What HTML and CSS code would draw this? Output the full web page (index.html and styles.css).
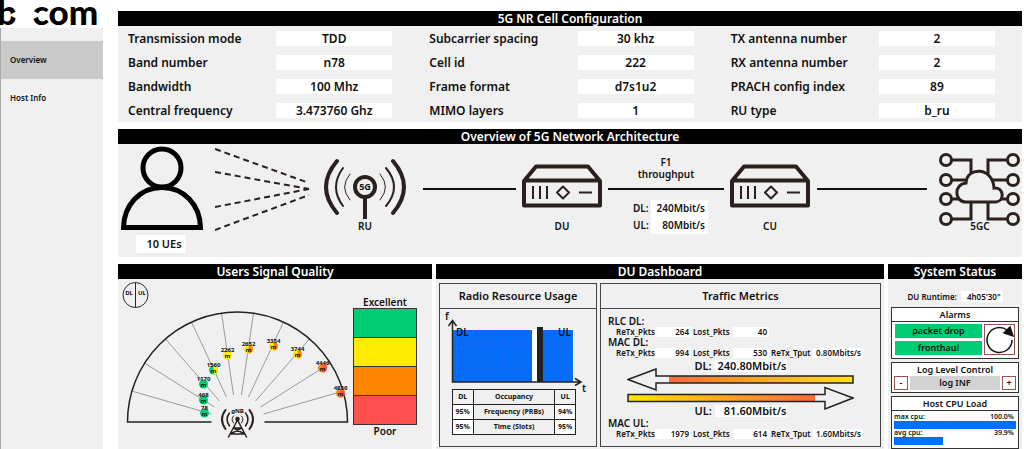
FILE: index.html
```html
<!DOCTYPE html>
<html lang="en">
<head>
<meta charset="utf-8">
<title>5G Network Overview</title>
<link rel="stylesheet" href="styles.css">
</head>
<body>
<svg width="0" height="0" class="defs" aria-hidden="true">
  <defs>
    <symbol id="server" viewBox="0 0 82 76">
      <g fill="none" stroke="#2a211f" stroke-linejoin="round">
        <path d="M3 37 15 22.500H67L79 37V61.500H3ZM3 36.500H79" stroke-width="4"/>
        <path d="M12 42V55M19 42V55M26 42V55M58 48.500H71M42 42.500 48 48.500 42 54.500 36 48.500Z" stroke-width="2"/>
      </g>
    </symbol>
  </defs>
</svg>
<div class="app">
  <aside class="sidebar">
    <svg class="logo" viewBox="0 0 103 28" role="img" aria-label="b com">
      <text x="-3" y="25">b</text>
      <text x="32" y="25">com</text>
      <path d="M9 15 19 10V20ZM42 15 31 10V20Z" fill="#fff"/>
    </svg>
    <nav class="nav">
      <a class="nav-link active" href="#overview">Overview</a>
      <a class="nav-link" href="#host">Host Info</a>
    </nav>
  </aside>

  <main class="main" id="overview">
    <section class="section">
      <h2 class="bar">5G NR Cell Configuration</h2>
      <div class="config">
        <dl class="pairs">
          <dt>Transmission mode</dt><dd>TDD</dd>
          <dt>Band number</dt><dd>n78</dd>
          <dt>Bandwidth</dt><dd>100 Mhz</dd>
          <dt>Central frequency</dt><dd>3.473760 Ghz</dd>
        </dl>
        <dl class="pairs">
          <dt>Subcarrier spacing</dt><dd>30 khz</dd>
          <dt>Cell id</dt><dd>222</dd>
          <dt>Frame format</dt><dd>d7s1u2</dd>
          <dt>MIMO layers</dt><dd>1</dd>
        </dl>
        <dl class="pairs">
          <dt>TX antenna number</dt><dd>2</dd>
          <dt>RX antenna number</dt><dd>2</dd>
          <dt>PRACH config index</dt><dd>89</dd>
          <dt>RU type</dt><dd>b_ru</dd>
        </dl>
      </div>
    </section>

    <section class="section">
      <h2 class="bar">Overview of 5G Network Architecture</h2>
      <div class="arch">
        <div class="node">
          <svg width="86" height="90" viewBox="0 0 86 90" fill="none" stroke="#000" stroke-width="5">
            <circle cx="44" cy="24" r="19"/>
            <path d="M5.500 83.500C6 61 22 43.500 44 43.500S82 61 82.500 83.500Z"/>
          </svg>
          <span class="ues">10 UEs</span>
        </div>
        <svg class="beams" width="100" height="90" viewBox="0 0 100 90" fill="none" stroke="#2a211f" stroke-width="2" stroke-dasharray="6 4">
          <path d="M0 5 94 39M0 28 94 45M0 63 94 45M0 86 94 51"/>
        </svg>
        <div class="node">
          <svg width="84" height="76" viewBox="0 0 84 76" fill="none" stroke="#2a211f" stroke-linecap="round">
            <circle cx="42" cy="43" r="10" stroke-width="4"/>
            <path d="M42 54V75" stroke-width="4" stroke-linecap="butt"/>
            <path d="M27 30Q16 43 27 56M57 30Q68 43 57 56" stroke-width="1"/>
            <path d="M20 24Q6 43 20 62M63 24Q79 43 63 62" stroke-width="2"/>
            <path d="M14 17Q-8 43 14 69M70 17Q92 43 70 69" stroke-width="4"/>
            <text class="svg-tiny" x="42" y="46">5G</text>
          </svg>
          <span class="label">RU</span>
        </div>
        <div class="wire wire-a"></div>
        <div class="node">
          <svg width="82" height="76"><use href="#server"/></svg>
          <span class="label">DU</span>
        </div>
        <div class="wire wire-b">
          <p class="f1">F1<br>throughput</p>
          <dl class="rates">
            <dt>DL:</dt><dd>240Mbit/s</dd>
            <dt>UL:</dt><dd>80Mbit/s</dd>
          </dl>
        </div>
        <div class="node">
          <svg width="82" height="76"><use href="#server"/></svg>
          <span class="label">CU</span>
        </div>
        <div class="wire wire-c"></div>
        <div class="node core">
          <svg width="84" height="84" viewBox="0 0 84 84" fill="none" stroke="#2a211f" stroke-width="3">
            <circle cx="8" cy="16" r="5.500"/><circle cx="8" cy="36" r="5.500"/><circle cx="8" cy="55" r="5.500"/><circle cx="8" cy="75" r="5.500"/>
            <circle cx="75" cy="16" r="5.500"/><circle cx="75" cy="36" r="5.500"/><circle cx="75" cy="55" r="5.500"/><circle cx="75" cy="75" r="5.500"/>
            <path d="M14 16H33V30M69 16H50V30M14 36H28M69 36H55M14 55H22M69 55H62M14 75H33V58M69 75H50V58"/>
            <path d="M27 58C16 57 16 40 28 39C29 22 55 23 56 44C66 43 67 57 58 58Z"/>
          </svg>
          <span class="label">5GC</span>
        </div>
      </div>
    </section>

    <div class="bottom">
      <section class="section">
        <h2 class="bar">Users Signal Quality</h2>
        <div class="quality">
          <svg class="fan" viewBox="0 0 232 169" fill="none">
            <g stroke="#2a2a2a">
              <circle cx="16" cy="16" r="12.500"/><path d="M16 3.500V28.500"/>
            </g>
            <g class="svg-mini"><text x="9.500" y="16">DL</text><text x="22.500" y="16">UL</text></g>
            <g stroke="#999">
              <path d="M92 135 12 112M95 128 25 84M100 122 46 60M107 118 72 43M114 116 102 34M122 116 134 34M129 118 164 43M136 122 190 60M141 128 211 84M144 135 224 112"/>
            </g>
            <path d="M92 143H8A110 110 0 0 1 228 143H145" stroke="#222" stroke-width="1.500"/>
            <g stroke="#2a211f" stroke-width="1.500" stroke-linecap="round">
              <path d="M118 141 109 158M118 141 127 158M114 149H122M111 155H125M111 155 122 149M125 155 114 149"/>
              <circle cx="118" cy="140" r="1.500" fill="#2a211f"/>
              <path d="M114 137Q111 140 114 144M122 137Q125 140 122 144" stroke-width="1"/>
              <path d="M110 134Q105 140 110 147M126 134Q131 140 126 147"/>
              <path d="M106 131Q99 140 106 150M130 131Q137 140 130 150" stroke-width="2"/>
            </g>
            <text class="svg-mini" x="118" y="134">gNB</text>
            <g stroke-width="0">
              <g fill="#00cc74"><circle cx="85" cy="134" r="4.500"/><circle cx="84" cy="121" r="4.500"/><circle cx="84" cy="105" r="4.500"/><circle cx="94" cy="91" r="4.500"/></g>
              <g fill="#ffec00"><path d="M94 86.500a4.500 4.500 0 0 1 0 9z"/><circle cx="108" cy="76" r="4.500"/><circle cx="129" cy="70" r="4.500"/><circle cx="154" cy="67" r="4.500"/><circle cx="178" cy="75" r="4.500"/></g>
              <g fill="#ff8500"><path d="M129 65.500a4.500 4.500 0 0 1 0 9zM154 62.500a4.500 4.500 0 0 1 0 9zM178 70.500a4.500 4.500 0 0 1 0 9z"/><circle cx="203" cy="89" r="4.500"/><circle cx="221" cy="114" r="4.500"/></g>
              <path fill="#ff4f4f" d="M203 84.500a4.500 4.500 0 0 1 0 9zM221 109.500a4.500 4.500 0 0 1 0 9z"/>
            </g>
            <g class="svg-mini">
              <text x="85" y="131">78</text><text x="85" y="137">m</text>
              <text x="84" y="118">468</text><text x="84" y="124">m</text>
              <text x="84" y="102">1170</text><text x="84" y="108">m</text>
              <text x="94" y="88">1560</text><text x="94" y="94">m</text>
              <text x="108" y="73">2262</text><text x="108" y="79">m</text>
              <text x="129" y="67">2652</text><text x="129" y="73">m</text>
              <text x="154" y="64">3354</text><text x="154" y="70">m</text>
              <text x="178" y="72">3744</text><text x="178" y="78">m</text>
              <text x="203" y="86">4446</text><text x="203" y="92">m</text>
              <text x="221" y="111">4836</text><text x="221" y="117">m</text>
            </g>
          </svg>
          <div class="scale">
            <span>Excellent</span>
            <div class="swatches">
              <i class="green"></i><i class="yellow"></i><i class="orange"></i><i class="red"></i>
            </div>
            <span>Poor</span>
          </div>
        </div>
      </section>

      <section class="section">
        <h2 class="bar">DU Dashboard</h2>
        <div class="dash">
          <article class="card">
            <h3 class="card-title">Radio Resource Usage</h3>
            <svg class="chart" viewBox="0 0 156 80">
              <defs>
                <pattern id="grid" width="6" height="6" patternUnits="userSpaceOnUse">
                  <rect width="6" height="6" fill="#006eff"/><path d="M0 0H6M0 0V6" stroke="#1b63e0"/>
                </pattern>
              </defs>
              <path d="M13 20H134V73H13Z" fill="#fff"/>
              <path d="M13 21H92V73H13ZM103 21H133V73H103Z" fill="url(#grid)"/>
              <path d="M97 18H103V73H97Z" fill="#222"/>
              <path d="M12.500 12V73H141M8.500 17 12.500 11.500 16.500 17M135 69.500 141 73 135 76.500" fill="none" stroke="#222" stroke-width="1.500"/>
              <text x="5" y="11">f</text><text x="142" y="83">t</text>
              <text x="16" y="27">DL</text><text x="118" y="27">UL</text>
            </svg>
            <table class="occupancy">
              <tr><th>DL</th><th>Occupancy</th><th>UL</th></tr>
              <tr><td>95%</td><th>Frequency (PRBs)</th><td>94%</td></tr>
              <tr><td>95%</td><th>Time (Slots)</th><td>95%</td></tr>
            </table>
          </article>

          <article class="card">
            <h3 class="card-title">Traffic Metrics</h3>
            <div class="traffic">
              <h4>RLC DL:</h4>
              <div class="metrics"><span>ReTx_Pkts</span><b>264</b><span>Lost_Pkts</span><b>40</b></div>
              <h4>MAC DL:</h4>
              <div class="metrics"><span>ReTx_Pkts</span><b>994</b><span>Lost_Pkts</span><b>530</b><span>ReTx_Tput</span><b>0.80Mbits/s</b></div>
              <div class="total total-dl"><span>DL:</span><b>240.80Mbit/s</b></div>
              <svg class="arrows" viewBox="0 0 227 42" fill="none">
                <defs>
                  <linearGradient id="dl"><stop offset="0" stop-color="#ff6a3c"/><stop offset="1" stop-color="#ffe600"/></linearGradient>
                  <linearGradient id="ul"><stop offset="0" stop-color="#ffe600"/><stop offset="1" stop-color="#ff6a3c"/></linearGradient>
                </defs>
                <path d="M42 8H226V15H42Z" fill="url(#dl)"/>
                <path d="M1 26H188V34H1Z" fill="url(#ul)"/>
                <path d="M1 11.500 29 1V8H226V15H29V22ZM226 30 198 19.500V26.500H1V33.500H198V41Z" stroke="#222" stroke-width="1.500"/>
              </svg>
              <div class="total total-ul"><span>UL:</span><b>81.60Mbit/s</b></div>
              <h4>MAC UL:</h4>
              <div class="metrics"><span>ReTx_Pkts</span><b>1979</b><span>Lost_Pkts</span><b>614</b><span>ReTx_Tput</span><b>1.60Mbits/s</b></div>
            </div>
          </article>
        </div>
      </section>

      <section class="section">
        <h2 class="bar">System Status</h2>
        <div class="status">
          <p class="runtime">DU Runtime: <b>4h05'30"</b></p>
          <div class="box">
            <h3 class="box-title">Alarms</h3>
            <div class="alarms">
              <div class="alarm-list"><span class="alarm">packet drop</span><span class="alarm">fronthaul</span></div>
              <button class="btn refresh" aria-label="Refresh alarms">
                <svg width="29" height="29" viewBox="0 0 29 29" fill="none" stroke="#111" stroke-width="1.500">
                  <path d="M27 15A12.500 12.500 0 1 1 22 5"/>
                  <path d="M25 2 19 8 28 11Z" fill="#111"/>
                </svg>
              </button>
            </div>
          </div>
          <div class="box">
            <h3 class="box-title plain">Log Level Control</h3>
            <div class="level">
              <button class="btn" aria-label="Decrease log level">-</button>
              <output class="level-value">log INF</output>
              <button class="btn" aria-label="Increase log level">+</button>
            </div>
          </div>
          <div class="box" id="host">
            <h3 class="box-title">Host CPU Load</h3>
            <div class="load">
              <div class="load-row"><span>max cpu:</span><span>100.0%</span></div>
              <div class="meter" style="width:100%"></div>
              <div class="load-row"><span>avg cpu:</span><span>39.9%</span></div>
              <div class="meter" style="width:39.9%"></div>
            </div>
          </div>
        </div>
      </section>
    </div>
  </main>
</div>
</body>
</html>
```

FILE: styles.css
```css
* { box-sizing: border-box; }
body {
  margin: 0;
  background: #fff;
  color: #111;
  font: 600 12px/15px "Noto Sans", "Open Sans", sans-serif;
}
h2, h3, h4, p, dl, dd { margin: 0; font-weight: 600; }
b { font-weight: 600; }
svg { display: block; }
.defs { position: absolute; }

.app { display: flex; gap: 15px; min-height: 100vh; padding-right: 2px; }
.sidebar { flex: 0 0 103px; display: flex; flex-direction: column; }
.logo { width: 103px; height: 28px; }
.logo text { font: 900 35px "Lato", sans-serif; fill: #000; }
.nav {
  flex: 1;
  padding-top: 13px;
  background: #f0f0f0;
  border-left: 1px solid #aaa;
}
.nav-link {
  display: block;
  padding: 0 9px;
  color: #111;
  font-size: 8px;
  line-height: 38px;
  text-decoration: none;
}
.nav-link.active { background: #c9c9c9; }

.main {
  flex: 1;
  min-width: 0;
  display: flex;
  flex-direction: column;
  gap: 7px;
  padding-top: 11px;
}
.section { display: flex; flex-direction: column; min-width: 0; background: #f0f0f0; }
.bar { background: #000; color: #fff; font-size: 12px; line-height: 15px; text-align: center; }

.config { display: grid; grid-template-columns: repeat(3, 1fr); padding: 5px 0 4px; }
.pairs { display: grid; grid-template-columns: 148fr 116fr; gap: 9px 0; padding: 0 27px 0 10px; }
.pairs dd { background: #fff; text-align: center; }

.arch { display: flex; height: 113px; }
.node { flex: none; display: flex; flex-direction: column; align-items: center; }
.ues { padding: 0 4px 0 10px; margin-top: 1px; background: #fff; font-size: 11px; line-height: 18px; }
.label { font-size: 10px; line-height: 12px; }
.beams { margin: 0 8px 0 11px; }
.wire {
  display: flex;
  flex-direction: column;
  background: linear-gradient(#111, #111) 0 44px / 100% 2px no-repeat;
}
.wire-a { flex: 93; margin: 0 5px 0 16px; }
.wire-b { flex: 116; margin: 0 5px; }
.wire-c { flex: 110; margin: 0 11px 0 6px; }
.f1 { height: 56px; padding-top: 12px; font-size: 10px; line-height: 12px; text-align: center; }
.rates {
  display: grid;
  grid-template-columns: 18px 57px;
  justify-content: end;
  margin-right: 16px;
  font-size: 10px;
  line-height: 17px;
}
.rates dd { padding-right: 3px; background: #fff; text-align: right; }
.core .label { margin-top: -8px; }

.bottom { flex: 1; display: grid; grid-template-columns: 314fr 448fr 134fr; gap: 4px; }
.quality { display: flex; padding-right: 15px; }
.fan { flex: 1; height: 169px; }
.svg-mini, .svg-tiny { fill: #111; stroke: none; font-size: 6px; font-weight: 700; text-anchor: middle; }
.svg-tiny { font-size: 9px; }
.scale {
  flex: 0 0 64px;
  display: flex;
  flex-direction: column;
  align-items: center;
  padding-top: 17px;
  font-size: 10px;
  line-height: 12px;
}
.swatches { display: grid; grid-auto-rows: 28px; gap: 1px; width: 100%; padding: 1px; background: #333; }
.green { background: #00cc74; }
.yellow { background: #ffec00; }
.orange { background: #ff8500; }
.red { background: #ff4f4f; }

.dash { flex: 1; display: grid; grid-template-columns: 158fr 281fr; gap: 3px; padding: 4px 3px 2px; }
.card { border: 1px solid #444; min-width: 0; }
.card-title { border-bottom: 1px solid #444; font-size: 11px; line-height: 24px; text-align: center; }
.chart { width: 156px; height: 80px; overflow: visible; }
.chart text { font-size: 10px; fill: #111; }
.occupancy {
  width: 124px;
  margin-left: 12px;
  border-collapse: collapse;
  font-size: 7px;
  line-height: 14px;
  text-align: center;
}
.occupancy th, .occupancy td { padding: 0; border: 1px solid #222; font-weight: 700; }
.occupancy td { background: #fff; }

.traffic { padding: 7px 7px 0; }
.traffic h4 { font-size: 10px; line-height: 11px; }
.metrics {
  display: grid;
  grid-template-columns: 41px 36px 42px 36px 44px 50px;
  padding-left: 6px;
  font-size: 8px;
  line-height: 10px;
}
.metrics span { padding-left: 2px; }
.metrics b { padding-right: 2px; background: #fff; text-align: right; white-space: nowrap; }
.total { display: grid; grid-template-columns: 20px 72px; justify-content: center; font-size: 11px; line-height: 12px; }
.total b { background: #fff; text-align: right; }
.total-dl { margin: 2px 0 -4px; }
.arrows { width: 227px; height: 42px; margin-left: 19px; }
.total-ul { margin: -5px 0 1px; }

.status { flex: 1; display: flex; flex-direction: column; gap: 3px; padding: 12px 3px 0; font-size: 9px; }
.runtime { padding-bottom: 1px; font-size: 8px; line-height: 12px; text-align: center; white-space: nowrap; }
.runtime b { margin-left: 2px; padding: 0 2px 0 6px; background: #fff; }
.box { border: 1px solid #333; background: #fff; }
.box-title { border-bottom: 1px solid #333; font-size: 9px; line-height: 13px; text-align: center; }
.plain { border-bottom: 0; }
.alarms { display: flex; gap: 2px; padding: 2px 3px 3px; }
.alarm-list { flex: 1; display: grid; gap: 3px; }
.alarm { background: #00cc74; line-height: 14px; text-align: center; }
.btn {
  padding: 0;
  border: 1px solid #9c5252;
  background: #fff;
  color: #111;
  font: inherit;
  line-height: 12px;
}
.refresh { width: 31px; height: 31px; }
.level { display: grid; grid-template-columns: 14px 1fr 14px; gap: 2px; padding: 0 2px 2px; }
.level-value { background: #d3d3d3; line-height: 14px; text-align: center; }
.load { padding: 2px 2px 3px; }
.load-row { display: flex; justify-content: space-between; padding-right: 2px; font-size: 7px; line-height: 8px; }
.meter { height: 8px; background: #006eff; }
```
